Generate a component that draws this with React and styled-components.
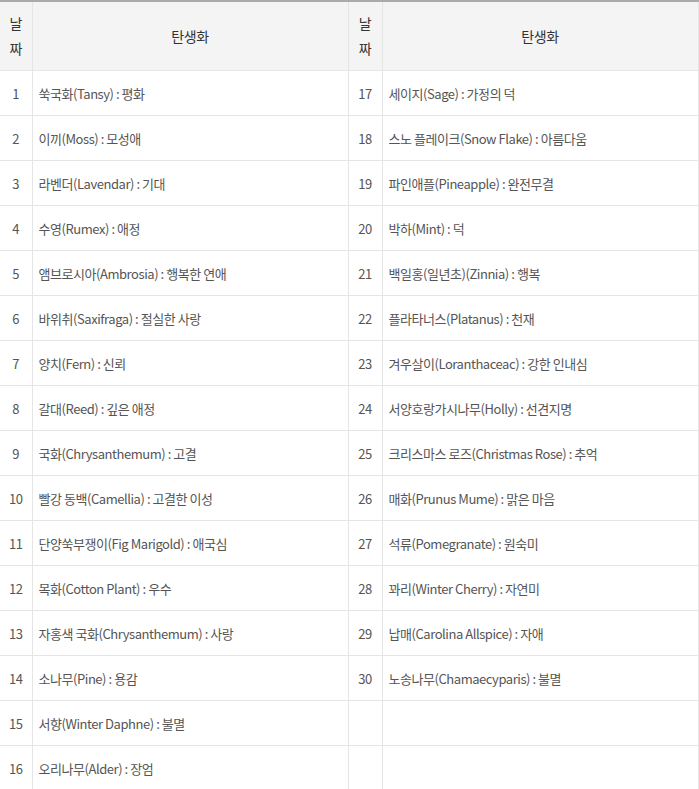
import React from "react";
import styled, { createGlobalStyle } from "styled-components";

const GlobalStyle = createGlobalStyle`
  html, body {
    margin: 0;
    padding: 0;
    background: #ffffff;
  }
  body {
    font-family: "Noto Sans CJK KR", "Noto Sans", sans-serif;
  }
`;

const left = [
  "쑥국화(Tansy) : 평화",
  "이끼(Moss) : 모성애",
  "라벤더(Lavendar) : 기대",
  "수영(Rumex) : 애정",
  "앰브로시아(Ambrosia) : 행복한 연애",
  "바위취(Saxifraga) : 절실한 사랑",
  "양치(Fern) : 신뢰",
  "갈대(Reed) : 깊은 애정",
  "국화(Chrysanthemum) : 고결",
  "빨강 동백(Camellia) : 고결한 이성",
  "단양쑥부쟁이(Fig Marigold) : 애국심",
  "목화(Cotton Plant) : 우수",
  "자홍색 국화(Chrysanthemum) : 사랑",
  "소나무(Pine) : 용감",
  "서향(Winter Daphne) : 불멸",
  "오리나무(Alder) : 장엄",
];

const right = [
  "세이지(Sage) : 가정의 덕",
  "스노 플레이크(Snow Flake) : 아름다움",
  "파인애플(Pineapple) : 완전무결",
  "박하(Mint) : 덕",
  "백일홍(일년초)(Zinnia) : 행복",
  "플라타너스(Platanus) : 천재",
  "겨우살이(Loranthaceac) : 강한 인내심",
  "서양호랑가시나무(Holly) : 선견지명",
  "크리스마스 로즈(Christmas Rose) : 추억",
  "매화(Prunus Mume) : 맑은 마음",
  "석류(Pomegranate) : 원숙미",
  "꽈리(Winter Cherry) : 자연미",
  "납매(Carolina Allspice) : 자애",
  "노송나무(Chamaecyparis) : 불멸",
];

const Table = styled.table`
  width: 698px;
  border-collapse: collapse;
  table-layout: fixed;
  border-top: 2px solid #aaaaaa;
  font-size: 13px;
  letter-spacing: -0.45px;
  color: #555555;

  th:first-child,
  td:first-child {
    border-left: none;
  }
`;

const Th = styled.th`
  background: #f4f4f4;
  border: 1px solid #e5e5e5;
  border-top: none;
  height: 68px;
  padding: 0 ${(p) => (p.$narrow ? "8px" : "6px")};
  font-size: 14px;
  font-weight: normal;
  line-height: 25px;
  color: #333333;
  text-align: center;
`;

const NumCell = styled.td`
  border: 1px solid #e5e5e5;
  height: 44px;
  padding: 0;
  text-align: center;
  color: #555555;
`;

const TextCell = styled.td`
  border: 1px solid #e5e5e5;
  height: 44px;
  padding: 0 6px;
  white-space: nowrap;
  color: #555555;
`;

export default function App() {
  const rows = left.map((l, i) => ({
    a: i + 1,
    l,
    b: right[i] ? i + 17 : "",
    r: right[i] || "",
  }));

  return (
    <>
      <GlobalStyle />
      <Table>
        <colgroup>
          <col style={{ width: 32 }} />
          <col style={{ width: 316 }} />
          <col style={{ width: 34 }} />
          <col style={{ width: 316 }} />
        </colgroup>
        <thead>
          <tr>
            <Th $narrow>날짜</Th>
            <Th>탄생화</Th>
            <Th $narrow>날짜</Th>
            <Th>탄생화</Th>
          </tr>
        </thead>
        <tbody>
          {rows.map((row) => (
            <tr key={row.a}>
              <NumCell>{row.a}</NumCell>
              <TextCell>{row.l}</TextCell>
              <NumCell>{row.b}</NumCell>
              <TextCell>{row.r}</TextCell>
            </tr>
          ))}
        </tbody>
      </Table>
    </>
  );
}
